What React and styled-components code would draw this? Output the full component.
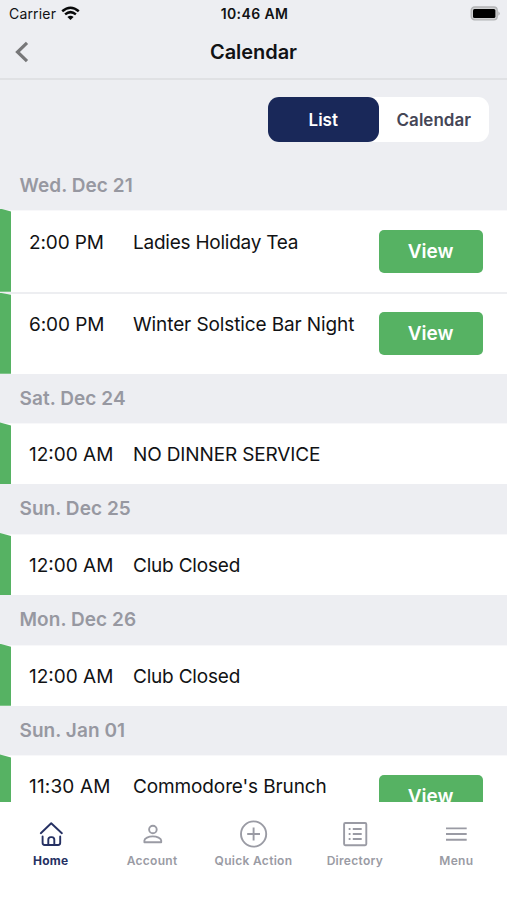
import React from "react";
import styled, { createGlobalStyle } from "styled-components";

const GlobalStyle = createGlobalStyle`
  * { box-sizing: border-box; }
  body { margin: 0; background: #fff; }
  button { font: inherit; border: 0; padding: 0; margin: 0; }
`;

const Screen = styled.div`
  width: 507px;
  height: 900px;
  display: flex;
  flex-direction: column;
  overflow: hidden;
  background: #fff;
  color: #111214;
  font-family: Inter, "Liberation Sans", sans-serif;
`;

const StatusBar = styled.div`
  height: 27px;
  flex: none;
  display: grid;
  grid-template-columns: 1fr auto 1fr;
  align-items: center;
  padding: 0 7px 1px 9px;
  background: #edeef2;
`;

const Carrier = styled.div`
  display: flex;
  align-items: center;
  gap: 5px;
  font-size: 14px;
  letter-spacing: 0.18px;
  svg { display: block; }
`;

const Clock = styled.div`
  font-size: 14px;
  font-weight: 600;
  letter-spacing: 0.4px;
`;

const Battery = styled.div`
  justify-self: end;
  svg { display: block; }
`;

const NavBar = styled.header`
  height: 53px;
  flex: none;
  display: grid;
  grid-template-columns: 60px 1fr 60px;
  align-items: center;
  padding-bottom: 2px;
  background: #edeef2;
  border-bottom: 2px solid #e0e1e4;
`;

const BackButton = styled.button`
  width: 40px;
  padding-left: 14px;
  background: none;
  svg { display: block; }
`;

const Title = styled.h1`
  margin: 0;
  text-align: center;
  font-size: 20px;
  font-weight: 600;
  letter-spacing: -0.06px;
`;

const Schedule = styled.main`
  height: 722px;
  flex: none;
  overflow: hidden;
  background: #edeef2;
`;

const ToggleRow = styled.div`
  display: flex;
  justify-content: flex-end;
  padding: 17px 18px 18px 0;
`;

const Toggle = styled.div`
  display: flex;
  width: 221px;
  height: 45px;
  border-radius: 11px;
  background: #fff;
`;

const ToggleOption = styled.button`
  flex: 1;
  border-radius: 11px;
  font-size: 17px;
  font-weight: 600;
  background: ${(p) => (p.$active ? "#192859" : "transparent")};
  color: ${(p) => (p.$active ? "#fff" : "#454656")};
`;

const DayHeading = styled.h2`
  height: 49.6px;
  margin: 0;
  padding-left: 19.5px;
  line-height: ${(p) => (p.$first ? 51 : 50)}px;
  font-size: 19px;
  font-weight: 600;
  letter-spacing: 0.06px;
  color: #9798a1;
`;

const EventRow = styled.article`
  position: relative;
  display: grid;
  grid-template-columns: 104px 1fr 104px;
  align-items: start;
  height: ${(p) => (p.$tall ? 82.1 : 61.1)}px;
  padding: ${(p) => (p.$divided ? 18 : 19)}px 24.5px 0 29px;
  background: #fff;
  border-top: ${(p) => (p.$divided ? "2px solid #edeef1" : "1px solid #f8f8fa")};
  &::before {
    content: "";
    position: absolute;
    left: 0;
    top: ${(p) => (p.$divided ? -1 : -2)}px;
    bottom: 0;
    width: 11px;
    background: #56b263;
    clip-path: polygon(0 0, 100% ${(p) => (p.$divided ? 2 : 3)}px, 100% 100%, 0 100%);
  }
`;

const EventText = styled.span`
  padding-top: ${(p) => p.$drop || 0}px;
  line-height: 24px;
  font-size: 19px;
  letter-spacing: ${(p) => p.$spacing || 0}px;
  white-space: nowrap;
`;

const ViewButton = styled.button`
  width: 104px;
  height: 43px;
  border-radius: 5px;
  background: #56b263;
  color: #fff;
  font-size: 19px;
  font-weight: 600;
`;

const TabBar = styled.nav`
  height: 98px;
  flex: none;
  display: grid;
  grid-template-columns: repeat(5, 1fr);
  padding-top: 17px;
  background: #fff;
`;

const Tab = styled.div`
  display: flex;
  flex-direction: column;
  align-items: center;
  gap: 4px;
  color: ${(p) => (p.$active ? "#263163" : "#9a9ba4")};
  font-size: 12px;
  line-height: 16px;
  font-weight: ${(p) => (p.$active ? 700 : 600)};
  letter-spacing: 0.3px;
  white-space: nowrap;
  svg { display: block; fill: none; stroke: currentColor; stroke-width: 1.9; }
`;

const icons = {
  home: (
    <svg width="30" height="30" viewBox="0 0 30 30" strokeLinecap="round" strokeLinejoin="round">
      <path d="M4.8 14.2 15.2 4.2l10.7 10" />
      <path d="M6.6 17.4v6.4q0 2.2 2 2.2h13.5q2.1 0 2.1-2.2v-6.4" />
      <path d="M12.3 25.8v-5q0-2.7 2.4-2.7h1.1q2.5 0 2.5 2.7v5" />
    </svg>
  ),
  account: (
    <svg width="30" height="30" viewBox="0 0 30 30">
      <circle cx="15.9" cy="10.5" r="3.8" />
      <path d="M7.4 23.2v-1.7c0-2.4 4.2-4.1 8.4-4.1s8.4 1.7 8.4 4.1v1.7z" strokeLinejoin="round" />
    </svg>
  ),
  quick: (
    <svg width="30" height="30" viewBox="0 0 30 30">
      <circle cx="15.6" cy="15" r="12.6" />
      <path d="M15.6 8.6v12.8M9.2 15h12.8" />
    </svg>
  ),
  directory: (
    <svg width="30" height="30" viewBox="0 0 30 30">
      <rect x="4.1" y="4" width="22.2" height="22.2" rx="1.2" />
      <path d="M12.8 10h8.9M12.8 15h8.9M12.8 20h8.9M8.7 10h1.8M8.7 15h1.8M8.7 20h1.8" />
    </svg>
  ),
  menu: (
    <svg width="30" height="30" viewBox="0 0 30 30">
      <path d="M5 9.4h20.7M5 15h20.7M5 20.8h20.7" />
    </svg>
  ),
};

const days = [
  { label: "Wed. Dec 21", events: [
    { time: "2:00 PM", timeSpacing: -0.12, name: "Ladies Holiday Tea", spacing: -0.24, drop: 1.4, view: true },
    { time: "6:00 PM", timeSpacing: -0.08, name: "Winter Solstice Bar Night", spacing: -0.11, drop: 1.4, view: true },
  ] },
  { label: "Sat. Dec 24", events: [{ time: "12:00 AM", name: "NO DINNER SERVICE", spacing: -0.14 }] },
  { label: "Sun. Dec 25", events: [{ time: "12:00 AM", name: "Club Closed", spacing: -0.2 }] },
  { label: "Mon. Dec 26", events: [{ time: "12:00 AM", name: "Club Closed", spacing: -0.2 }] },
  { label: "Sun. Jan 01", events: [
    { time: "11:30 AM", timeSpacing: 0.15, name: "Commodore's Brunch", spacing: -0.12, view: true },
  ] },
];

const tabs = [
  { icon: "home", label: "Home" },
  { icon: "account", label: "Account" },
  { icon: "quick", label: "Quick Action" },
  { icon: "directory", label: "Directory" },
  { icon: "menu", label: "Menu" },
];

export default function App() {
  return (
    <Screen>
      <GlobalStyle />
      <StatusBar>
        <Carrier>
          Carrier
          <svg width="19" height="15" viewBox="0 0 19 15" fill="none" stroke="#08090a" strokeWidth="2.5">
            <path d="M1.2 5.2q8.3-7 16.6 0M4.1 8.4q5.4-4.5 10.8 0" />
            <path d="M9.5 14 6.4 10.9q3.1-2.5 6.2 0z" fill="#08090a" stroke="none" />
          </svg>
        </Carrier>
        <Clock>10:46 AM</Clock>
        <Battery>
          <svg width="30" height="15" viewBox="0 0 30 15">
            <rect x="1.2" y="1" width="26" height="12.8" rx="3.4" fill="#d0d1d3" stroke="#b2b3b5" strokeWidth="1.3" />
            <rect x="3" y="2.9" width="22.4" height="9" rx="1.5" fill="#000" />
            <path d="M28.3 5.2q3 2.3 0 4.6z" fill="#b2b3b5" />
          </svg>
        </Battery>
      </StatusBar>
      <NavBar>
        <BackButton aria-label="Back">
          <svg width="16" height="22" viewBox="0 0 16 22" fill="none" stroke="#777779" strokeWidth="3.2">
            <path d="M13 1.8 3.5 11l9.5 9.2" />
          </svg>
        </BackButton>
        <Title>Calendar</Title>
      </NavBar>
      <Schedule>
        <ToggleRow>
          <Toggle>
            <ToggleOption $active>List</ToggleOption>
            <ToggleOption>Calendar</ToggleOption>
          </Toggle>
        </ToggleRow>
        {days.map((day, d) => (
          <section key={day.label}>
            <DayHeading $first={d === 0}>{day.label}</DayHeading>
            {day.events.map((event, i) => (
              <EventRow key={event.time} $tall={event.view} $divided={i > 0}>
                <EventText $drop={event.drop} $spacing={event.timeSpacing}>{event.time}</EventText>
                <EventText $drop={event.drop} $spacing={event.spacing}>{event.name}</EventText>
                {event.view && <ViewButton>View</ViewButton>}
              </EventRow>
            ))}
          </section>
        ))}
      </Schedule>
      <TabBar>
        {tabs.map((tab, i) => (
          <Tab key={tab.label} $active={i === 0}>
            {icons[tab.icon]}
            {tab.label}
          </Tab>
        ))}
      </TabBar>
    </Screen>
  );
}
